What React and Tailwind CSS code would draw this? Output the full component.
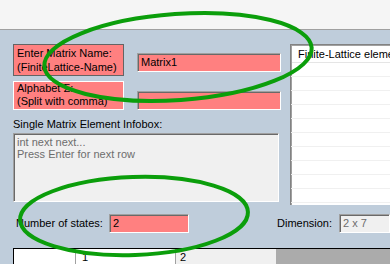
import React from 'react';

const TextBox = ({ className = '', children }) => (
  <div
    className={`border border-t-[#a0a0a0] border-l-[#a0a0a0] border-b-white border-r-white shadow-[inset_1px_1px_0_#696969] pl-[3px] leading-[16px] ${className}`}
  >
    {children}
  </div>
);

const App = () => {
  const rows = [0, 1, 2, 3, 4, 5, 6, 7, 8, 9];

  return (
    <div
      className="relative w-[390px] h-[264px] overflow-hidden bg-[#bfcddb] text-[11px] text-black"
      style={{ fontFamily: '"Liberation Sans", Arial, sans-serif' }}
    >
      <div className="h-[30px] bg-[#f5f5f5] border-b border-[#a0a0a0]" />

      <div className="flex">
        <div className="w-[290px] shrink-0 pl-[13px] pt-[14px]">
          <div className="flex items-start">
            <div className="w-[111px] h-[32px] bg-[#ff8080] border border-[#646464] pl-[3px] pt-[1px] leading-[14px]">
              Enter Matrix Name:
              <br />
              (FiniteLattice-Name)
            </div>
            <TextBox className="ml-[13px] mt-[9px] w-[144px] h-[19px] bg-[#ff8080]">Matrix1</TextBox>
          </div>

          <div className="flex items-end mt-[5px]">
            <div className="w-[111px] h-[29px] bg-[#ff8080] border border-white pl-[3px] leading-[13px]">
              Alphabet Σ:
              <br />
              (Split with comma)
            </div>
            <TextBox className="ml-[13px] w-[144px] h-[19px] bg-[#ff8080]" />
          </div>

          <div className="mt-[8px] leading-[13px]">Single Matrix Element Infobox:</div>

          <div className="mt-[2px] w-[266px] h-[69px] bg-[#f0f0f0] border border-t-[#a0a0a0] border-l-[#a0a0a0] border-b-white border-r-white shadow-[inset_1px_1px_0_#696969] pl-[3px] pt-[2px] leading-[12px] text-[#6d6d6d]">
            int next next...
            <br />
            Press Enter for next row
          </div>
        </div>

        <div className="flex-1 min-w-0 overflow-hidden mt-[14px] h-[161px] bg-white border-t border-l border-[#828282] shadow-[inset_1px_1px_0_#a0a0a0]">
          <div className="h-[17px] ml-[1px] mt-[1px] flex items-center pl-[6px] border-b border-[#e5e5e5] whitespace-nowrap leading-[14px]">
            Finite-Lattice elements
          </div>
          {rows.map((r) => (
            <div key={r} className="h-[14px] border-b border-[#f0f0f0]" />
          ))}
        </div>
      </div>

      <div className="flex items-center mt-[9px] h-[19px]">
        <div className="w-[109px] shrink-0 pl-[16px]">Number of states:</div>
        <TextBox className="w-[80px] shrink-0 h-[19px] bg-[#ff8080]">2</TextBox>
        <div className="ml-[88px] w-[62px] shrink-0">Dimension:</div>
        <TextBox className="flex-1 h-[19px] bg-[#f0f0f0] text-[#6d6d6d]">2 x 7</TextBox>
      </div>

      <div className="mt-[15px] ml-[13px] h-[20px] border-t border-l border-[#000] bg-[#ababab] flex">
        <div className="w-[62px] bg-white border-r border-[#a0a0a0]" />
        <div className="w-[100px] bg-white border-r border-[#a0a0a0] pl-[6px] leading-[16px]">1</div>
        <div className="w-[100px] bg-[#f0f0f0] pl-[4px] leading-[16px]">2</div>
      </div>

      <svg className="absolute inset-0 pointer-events-none" width="390" height="264" viewBox="0 0 390 264">
        <ellipse
          cx="178"
          cy="57"
          rx="134"
          ry="43"
          transform="rotate(-4 178 57)"
          fill="none"
          stroke="#0b9e0b"
          strokeWidth="4"
        />
        <ellipse
          cx="134"
          cy="216"
          rx="114"
          ry="39"
          transform="rotate(-2 134 216)"
          fill="none"
          stroke="#0b9e0b"
          strokeWidth="4"
        />
      </svg>
    </div>
  );
};

export default App;
